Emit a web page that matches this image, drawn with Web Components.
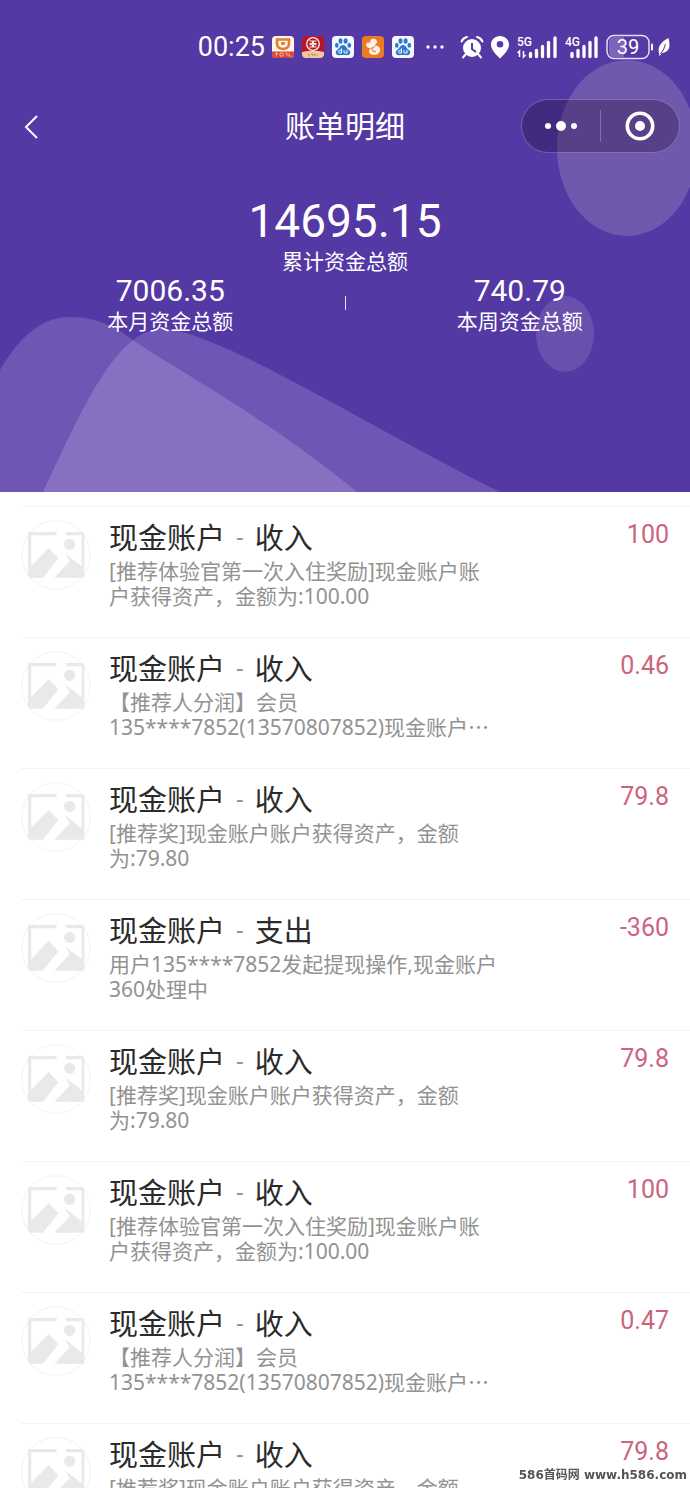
<!DOCTYPE html>
<html lang="zh-CN">
<head>
<meta charset="utf-8">
<meta name="viewport" content="width=device-width, initial-scale=1">
<title>账单明细</title>
<style>
  body { margin: 0; background: #fff; font-family: "Noto Sans", "Noto Sans CJK SC", sans-serif; }
</style>
</head>
<body>
<bill-page>
  <status-bar slot="header"></status-bar>
  <nav-bar slot="header">账单明细</nav-bar>
  <fund-summary slot="header">
    <fund-figure slot="total" size="large" value="14695.15">累计资金总额</fund-figure>
    <fund-figure slot="month" value="7006.35">本月资金总额</fund-figure>
    <fund-figure slot="week" value="740.79">本周资金总额</fund-figure>
  </fund-summary>
  <bill-row kind="收入" amount="100">[推荐体验官第一次入住奖励]现金账户账<br>户获得资产，金额为:100.00</bill-row>
  <bill-row kind="收入" amount="0.46" clipped>【推荐人分润】会员<br>135****7852(13570807852)现金账户</bill-row>
  <bill-row kind="收入" amount="79.8">[推荐奖]现金账户账户获得资产，金额<br>为:79.80</bill-row>
  <bill-row kind="支出" amount="-360">用户135****7852发起提现操作,现金账户<br>360处理中</bill-row>
  <bill-row kind="收入" amount="79.8">[推荐奖]现金账户账户获得资产，金额<br>为:79.80</bill-row>
  <bill-row kind="收入" amount="100">[推荐体验官第一次入住奖励]现金账户账<br>户获得资产，金额为:100.00</bill-row>
  <bill-row kind="收入" amount="0.47" clipped>【推荐人分润】会员<br>135****7852(13570807852)现金账户</bill-row>
  <bill-row kind="收入" amount="79.8">[推荐奖]现金账户账户获得资产，金额<br>为:79.80</bill-row>
  <site-mark slot="mark">586首码网 www.h586.com</site-mark>
</bill-page>

<script>
const define = (name, html, fill) => customElements.define(name, class extends HTMLElement {
  constructor() {
    super();
    this.attachShadow({ mode: "open" }).innerHTML = html;
  }
  connectedCallback() { if (fill) fill(this, this.shadowRoot); }
});

define("bill-page", `
<style>
  :host { display: flex; flex-direction: column; height: 100vh; overflow: hidden; }
  header { position: relative; flex: none; background: #5438a4; color: #fff; padding-bottom: 159px; }
  .art { position: absolute; inset: 0; width: 100%; height: 100%; }
  .content { position: relative; }
  main { flex: 1; min-height: 0; overflow-y: auto; scrollbar-width: none; padding-top: 14px; }
</style>
<header>
  <svg class="art" viewBox="0 0 690 492" preserveAspectRatio="none" aria-hidden="true">
    <ellipse cx="627" cy="148" rx="70" ry="88" fill="#7058ae"/>
    <ellipse cx="565" cy="334" rx="29" ry="38" fill="#6a50ad"/>
    <g fill="#f4e4ff" fill-opacity=".18">
      <path d="M0 370C22 333 44 317 70 317C100 317 120 330 134 341C190 378 270 420 357 492H0Z"/>
      <path d="M43 492C80 415 115 329 162 329C215 329 360 422 500 492Z"/>
    </g>
  </svg>
  <div class="content"><slot name="header"></slot></div>
</header>
<main role="list"><slot></slot></main>
<slot name="mark"></slot>`);

define("status-bar", `
<style>
  :host { display: flex; align-items: center; justify-content: flex-end; height: 94px; padding-right: 20px; font-family: Roboto, sans-serif; }
  time { font-size: 27px; line-height: 32px; margin-right: 7px; }
  svg { display: block; flex: none; }
  .apps { display: flex; gap: 8px; margin-right: 12px; }
  .signals { display: flex; align-items: center; gap: 7px; margin-left: 16px; }
  .power { display: flex; align-items: center; gap: 4px; }
</style>
<time>00:25</time>
<div class="apps">
  <svg width="22" height="22" viewBox="0 0 22 22"><rect width="22" height="22" rx="4" fill="#fff4ec"/><path d="M5 3.500H17V7.500C17 11 15 13 11 13S5 11 5 7.500Z" fill="none" stroke="#e2802f" stroke-width="2.600"/><path d="M9 6h4v2q0 1-2 1t-2-1Z" fill="#e2802f"/><path d="M0 15.500H22V18q0 4-4 4H4q-4 0-4-4Z" fill="#d8453b"/><path d="M3 17.500h3M4.500 16.500v4M8 17h3v3H8ZM13 17h2v3M17 17v3h2" stroke="#ffd9c8" stroke-opacity=".7" fill="none"/></svg>
  <svg width="22" height="22" viewBox="0 0 22 22"><rect width="22" height="22" rx="4" fill="#b71626"/><circle cx="11" cy="8" r="6.300" fill="none" stroke="#fff0ea" stroke-width="1.300"/><path d="M7.500 5h3v2.500h-3M14.500 5h-3v2.500h3M7.500 11h3V8.800h-3M14.500 11h-3V8.800h3" fill="none" stroke="#fff0ea" stroke-width="1.100"/><path d="M0 16Q11 13.500 22 16V18q0 4-4 4H4q-4 0-4-4Z" fill="#f3c8a4"/><path d="M7 17.500v3M9 18h2v2M13 17.500v3M15 19h1" stroke="#b98158" fill="none"/></svg>
  <svg width="22" height="22" viewBox="0 0 22 22"><rect width="22" height="22" rx="4" fill="#f5f8ff"/><g fill="#2d78cf"><ellipse cx="8.500" cy="5" rx="2" ry="2.800"/><ellipse cx="13.600" cy="5" rx="2" ry="2.800"/><ellipse cx="4.800" cy="9.300" rx="1.800" ry="2.500"/><ellipse cx="17.300" cy="9.300" rx="1.800" ry="2.500"/><path d="M11 9C14 9 14 12 17 14C20 17 17 20 14 19H8C5 20 2 17 5 14C8 12 8 9 11 9Z"/></g><path d="M9.500 12.500V17H8q-1.500 0-1.500-1.300T8 14.200h1.500M12 14.200v2q0 .8 1 .8h2v-3" fill="none" stroke="#fff"/></svg>
  <svg width="22" height="22" viewBox="0 0 22 22"><rect width="22" height="22" rx="4" fill="#ed7b24"/><path d="M10 3C13 2 15.500 4 15 7C13.500 7.500 13 8.500 13 10C15.500 9 19 11.500 18 15C17 18.500 12.500 19.500 9.500 18.500C6.500 17.500 6.500 14 9 12C6 12.500 3.500 10.500 4.500 7.500C5.500 6 7.500 6.500 8.500 7C8 5 8.500 3.500 10 3Z" fill="#fff4e9"/><path d="M9 12Q11 12.500 13 10M10 12.500Q10.500 16 14 15.500" fill="none" stroke="#ed7b24" stroke-width="1.200"/></svg>
  <svg width="22" height="22" viewBox="0 0 22 22"><rect width="22" height="22" rx="4" fill="#f5f8ff"/><g fill="#2d78cf"><ellipse cx="8.500" cy="5" rx="2" ry="2.800"/><ellipse cx="13.600" cy="5" rx="2" ry="2.800"/><ellipse cx="4.800" cy="9.300" rx="1.800" ry="2.500"/><ellipse cx="17.300" cy="9.300" rx="1.800" ry="2.500"/><path d="M11 9C14 9 14 12 17 14C20 17 17 20 14 19H8C5 20 2 17 5 14C8 12 8 9 11 9Z"/></g><path d="M9.500 12.500V17H8q-1.500 0-1.500-1.300T8 14.200h1.500M12 14.200v2q0 .8 1 .8h2v-3" fill="none" stroke="#fff"/></svg>
</div>
<svg width="18" height="6" viewBox="0 0 18 6" fill="#fff"><circle cx="2" cy="3" r="1.700"/><circle cx="9" cy="3" r="1.700"/><circle cx="16" cy="3" r="1.700"/></svg>
<div class="signals">
  <svg width="24" height="24" viewBox="0 0 24 24"><circle cx="12" cy="13" r="9" fill="#fff"/><path d="M1.500 6.500Q3 3 7 2M22.500 6.500Q21 3 17 2M5.500 19.500L3 22.500M18.500 19.500L21 22.500" stroke="#fff" stroke-width="2" fill="none" stroke-linecap="round"/><path d="M12 8V14L16 17" fill="none" stroke="#5438a4" stroke-width="2"/></svg>
  <svg width="18" height="24" viewBox="0 0 18 24"><path fill-rule="evenodd" d="M9 1C4 1 0 4.800 0 9.600C0 14.500 4 19 9 23.500C14 19 18 14.500 18 9.600C18 4.800 14 1 9 1ZM9 6a3.300 3.300 0 1 1 0 6.600A3.300 3.300 0 0 1 9 6Z" fill="#fff"/></svg>
  <svg width="42" height="24" viewBox="0 0 42 24"><text x="1" y="11" font-size="12" font-weight="500" fill="#fff">5G</text><path d="M3.500 22V16L1.500 18M7.500 16V22L9.500 20" fill="none" stroke="#fff" stroke-width="1.500"/><path d="M14.500 18.500V21.500M20.500 15.500V21.500M26.500 11.500V21.500M32.500 7.500V21.500M39 3V21.500" stroke="#fff" stroke-width="3.300" stroke-linecap="round"/></svg>
  <svg width="34" height="24" viewBox="0 0 34 24"><text x="0" y="11" font-size="12" font-weight="500" fill="#fff">4G</text><path d="M7 18.500V21.500M13 15.500V21.500M19 11.500V21.500M25 7.500V21.500M31 3V21.500" stroke="#fff" stroke-width="3.300" stroke-linecap="round"/></svg>
  <div class="power">
    <svg width="48" height="26" viewBox="0 0 48 26"><rect x="1" y="1.500" width="42" height="23" rx="7" fill="none" stroke="#e4dcf6" stroke-width="1.500"/><path d="M8 3H18V23H8Q3 23 3 18V8Q3 3 8 3Z" fill="#7c65bd"/><text x="22" y="20" text-anchor="middle" font-size="20" fill="#fff">39</text><path d="M46 10.500V15.500" stroke="#fff" stroke-width="2" stroke-linecap="round"/></svg>
    <svg width="12" height="22" viewBox="0 0 12 22"><path d="M10.500 2C-1 8 0 14 1.500 20L4 17C12 16 12.500 10 10.500 2Z" fill="#fff"/><path d="M7.500 8Q6.500 13 2.500 18" fill="none" stroke="#5438a4"/></svg>
  </div>
</div>`);

define("nav-bar", `
<style>
  :host { display: grid; grid-template-columns: 1fr auto 1fr; align-items: center; height: 64px; padding: 0 10px; }
  button { border: 0; padding: 0; margin: 0; background: none; color: inherit; display: grid; place-items: center; cursor: pointer; }
  .back { width: 42px; height: 44px; }
  h1 { margin: 0; font-size: 30px; line-height: 40px; font-weight: 400; }
  .capsule { justify-self: end; display: flex; align-items: center; box-sizing: border-box; width: 159px; height: 54px; border: 1px solid rgba(255,255,255,.25); border-radius: 27px; background: rgba(30,10,50,.3); }
  .capsule button { flex: 1; height: 100%; }
  .capsule i { width: 1px; height: 32px; background: rgba(255,255,255,.25); }
</style>
<button class="back" aria-label="返回"><svg width="14" height="26" viewBox="0 0 14 26"><path d="M13 3L2 14L13 25" fill="none" stroke="#fff" stroke-width="2"/></svg></button>
<h1><slot></slot></h1>
<div class="capsule">
  <button aria-label="更多"><svg width="32" height="12" viewBox="0 0 32 12" fill="#fff"><circle cx="3" cy="6" r="3"/><circle cx="16" cy="6" r="5"/><circle cx="29" cy="6" r="3"/></svg></button>
  <i></i>
  <button aria-label="关闭"><svg width="30" height="30" viewBox="0 0 30 30"><circle cx="15" cy="15" r="12.700" fill="none" stroke="#fff" stroke-width="3.600"/><circle cx="15" cy="15" r="5" fill="#fff"/></svg></button>
</div>`);

define("fund-summary", `
<style>
  :host { display: block; padding-top: 35px; }
  .split { display: grid; grid-template-columns: 1fr 1px 1fr; gap: 4px; align-items: center; }
  i { height: 14px; background: #e9e2f8; }
</style>
<slot name="total"></slot>
<div class="split"><slot name="month"></slot><i></i><slot name="week"></slot></div>`);

define("fund-figure", `
<style>
  :host { display: block; text-align: center; }
  .value { font-family: Roboto, sans-serif; font-size: 30px; line-height: 36px; }
  :host([size="large"]) .value { font-size: 46px; line-height: 56px; }
  .label { font-size: 21px; line-height: 24px; }
</style>
<div class="value"></div><div class="label"><slot></slot></div>`,
(el, root) => { root.querySelector(".value").textContent = el.getAttribute("value"); });

define("bill-row", `
<style>
  :host { display: flex; align-items: flex-start; margin-left: 21px; padding: 13px 21px 28px 0; border-top: 1px solid #f3f3f4; }
  svg { flex: none; display: block; margin-right: 18px; }
  .text { flex: 1; min-width: 0; }
  h2 { display: flex; align-items: center; margin: 0 0 3px; font-size: 29px; line-height: 36px; font-weight: 400; color: #2b2b2b; }
  .dash { font-size: 24px; line-height: 28px; padding: 0 11px 4px; color: #929292; }
  p { margin: 0; font-size: 21px; line-height: 25px; color: #929292; white-space: nowrap; }
  .more { font-family: "Noto Sans CJK SC", sans-serif; line-height: 21px; }
  .more[hidden] { display: none; }
  .amount { font-family: Roboto, sans-serif; font-size: 25px; line-height: 30px; color: #cc6480; }
</style>
<svg width="70" height="70" viewBox="34 31 210 210" aria-hidden="true">
  <circle cx="139" cy="136" r="103" fill="#fff" stroke="#f4f2f4" stroke-width="3"/>
  <g fill="#ebe8ec"><path d="M55 67H143L137 77H65V168L117 115L146 146L100 204H62Q55 204 55 197Z"/><path d="M168 67H216Q224 67 224 75V204H134L180 155L166 131L216 170V77H170Z"/><circle cx="180" cy="104" r="17"/></g>
</svg>
<div class="text">
  <h2>现金账户<span class="dash">-</span><span class="kind"></span></h2>
  <p><slot></slot><span class="more" hidden>…</span></p>
</div>
<div class="amount"></div>`,
(el, root) => {
  el.setAttribute("role", "listitem");
  root.querySelector(".kind").textContent = el.getAttribute("kind");
  root.querySelector(".amount").textContent = el.getAttribute("amount");
  root.querySelector(".more").hidden = !el.hasAttribute("clipped");
});

define("site-mark", `
<style>
  :host { position: fixed; right: 3px; bottom: 4px; font: bold 12px/18px "DejaVu Sans", "Noto Sans CJK SC", sans-serif; color: #555; text-shadow: 1px 0 #fff, -1px 0 #fff, 0 1px #fff, 0 -1px #fff; white-space: nowrap; }
</style>
<slot></slot>`);
</script>
</body>
</html>
